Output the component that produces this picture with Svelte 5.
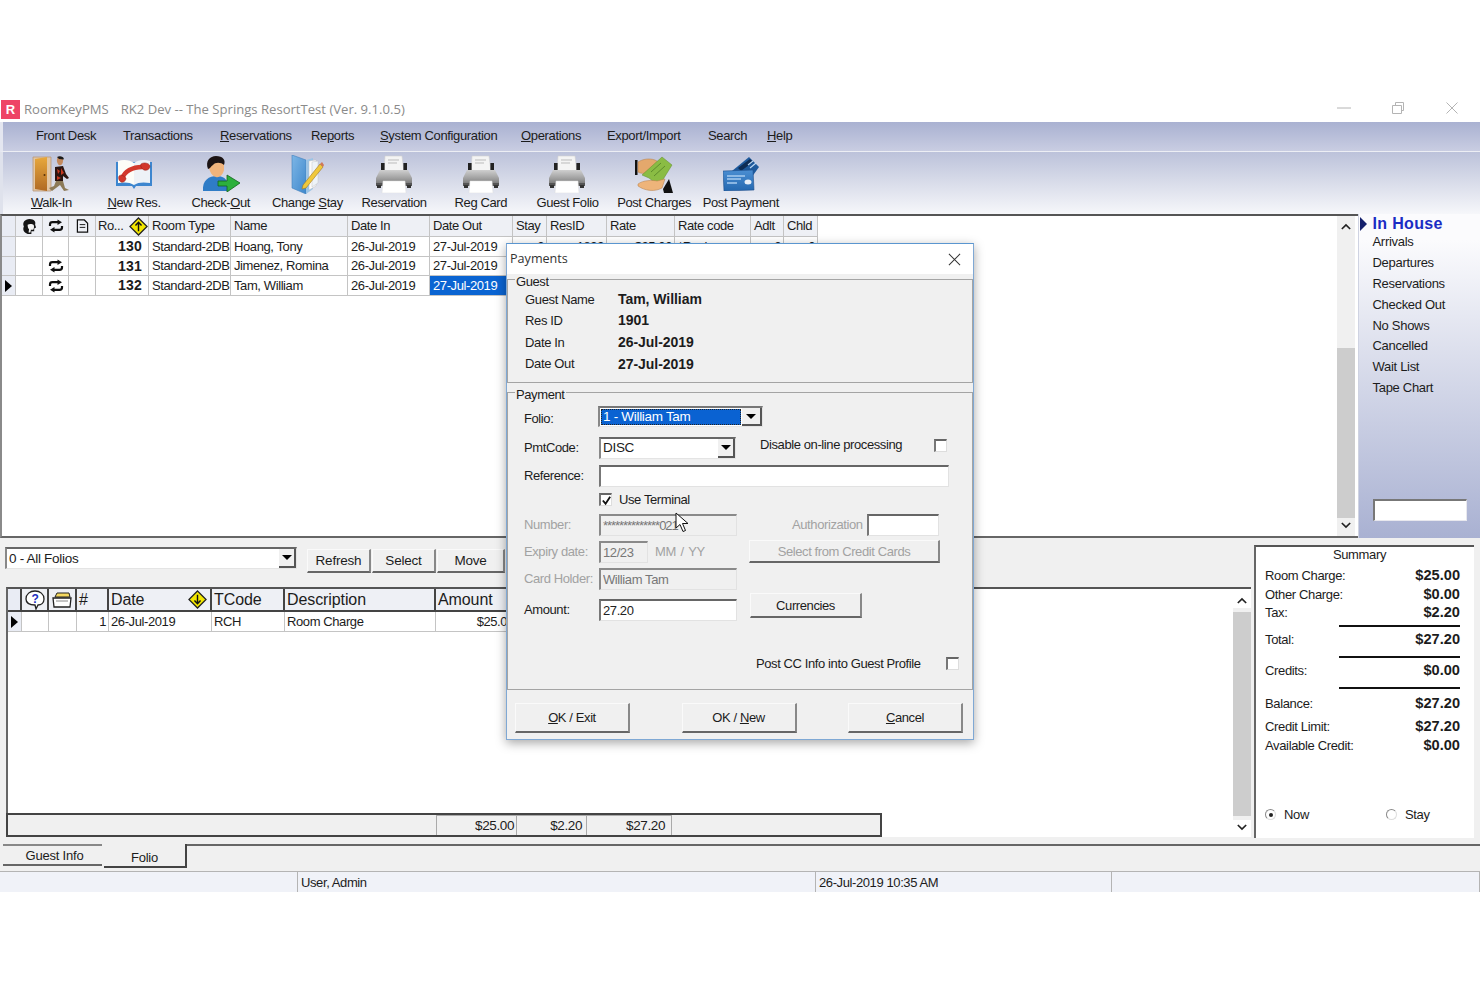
<script>
	const menu = [
		['', 'Front Desk', ''],
		['', 'Transactions', ''],
		['', 'R', 'eservations'],
		['Re', 'p', 'orts'],
		['', 'S', 'ystem Configuration'],
		['', 'O', 'perations'],
		['', 'Export/Import', ''],
		['', 'Search', ''],
		['', 'H', 'elp']
	];
	const sideLinks = ['Arrivals', 'Departures', 'Reservations', 'Checked Out', 'No Shows', 'Cancelled', 'Wait List', 'Tape Chart'];
	const headers = ['Room Type', 'Name', 'Date In', 'Date Out', 'Stay', 'ResID', 'Rate', 'Rate code', 'Adlt', 'Chld'];
	const rooms = [
		{ room: 130, type: 'Standard-2DB', name: 'Hoang, Tony', repeat: false, current: false },
		{ room: 131, type: 'Standard-2DB', name: 'Jimenez, Romina', repeat: true, current: false },
		{ room: 132, type: 'Standard-2DB', name: 'Tam, William', repeat: true, current: true }
	];
	const guest = [
		['Guest Name', 'Tam, William'],
		['Res ID', '1901'],
		['Date In', '26-Jul-2019'],
		['Date Out', '27-Jul-2019']
	];
</script>

{#snippet repeatIcon()}
	<svg class="repeat" viewBox="0 0 16 14" width="16" height="14">
		<path d="M2 7V5.5C2 4 3 3.2 4.5 3.2H10" fill="none" stroke="#111" stroke-width="2.2" />
		<path d="M9.5 0.4L14 3.2L9.5 6Z" fill="#111" />
		<path d="M14 7V8.5C14 10 13 10.8 11.5 10.8H6" fill="none" stroke="#111" stroke-width="2.2" />
		<path d="M6.5 8L2 10.8L6.5 13.6Z" fill="#111" />
	</svg>
{/snippet}

{#snippet sortIcon(path)}
	<svg viewBox="0 0 20 20" width="19" height="19">
		<path d="M10 1L19 10L10 19L1 10Z" fill="#f2e600" stroke="#222" stroke-width="1.3" />
		<path d={path} fill="none" stroke="#111" stroke-width="1.5" />
	</svg>
{/snippet}

{#snippet printer()}
	<svg viewBox="0 0 38 38" width="38" height="38">
		<path d="M10 1H27L29 17H9Z" fill="#f4f4f4" stroke="#d0d0d0" stroke-width="0.6" />
		<path d="M13 5H24M13 8H22" stroke="#bbb" stroke-width="1" />
		<rect x="6" y="8" width="3.6" height="9" fill="#222" />
		<rect x="28.4" y="8" width="3.6" height="9" fill="#222" />
		<path d="M5 15H33L37 23V30H1V23Z" fill="url(#printerBody)" />
		<rect x="1" y="28" width="36" height="3" fill="#555" />
		<path d="M8 26H30L31 38H7Z" fill="#fff" stroke="#ddd" stroke-width="0.5" />
		<rect x="2" y="30" width="4" height="3" fill="#333" />
		<rect x="32" y="30" width="4" height="3" fill="#333" />
	</svg>
{/snippet}

{#snippet toolIcon(kind)}
	{#if kind === 'walk'}
		<svg viewBox="0 0 38 36" width="38" height="36">
			<path d="M1 1H19V35H1Z" fill="#e2c6a4" stroke="#b89878" stroke-width="0.8" />
			<path d="M3 3L15 1V35L3 33Z" fill="url(#doorFill)" />
			<circle cx="12.5" cy="19" r="1" fill="#5a3208" />
			<path d="M26 1C29 0 32 2 31 5C31 8 29 10 27 9C25 8 24 3 26 1Z" fill="#c48a5e" />
			<path d="M25 1C28-1 33 1 31.5 3.5L27 3Z" fill="#1a1a1a" />
			<path d="M23 11L31 10L34 18L37 22L35 23L31 20L31 25L23 25Z" fill="#2a1410" />
			<path d="M25 13L28 15L26 18ZM29 12L32 17L29 19ZM25 20L29 22L25 24Z" fill="#c43820" />
			<path d="M24 25L31 25L33 32L37 34L32 35L28 29L24 32L20 35L17 32L22 30Z" fill="#8c7a58" />
		</svg>
	{:else if kind === 'book'}
		<svg viewBox="0 0 38 31" width="38" height="31">
			<path d="M1 3H19L37 3V27H21L19 30L17 27H1Z" fill="#3d86cf" />
			<path d="M3 2C9 0 15 1 19 4V26C15 23 9 23 3 24Z" fill="#fdfdf8" />
			<path d="M35 2C29 0 23 1 19 4V26C23 23 29 23 35 24Z" fill="#eef2f7" />
			<path d="M7 20C9 13 17 7 30 8" fill="none" stroke="#d2382c" stroke-width="4.5" />
			<path d="M4 17C6 15 9 17 11 19C11 22 8 24 6 23C4 22 3 19 4 17Z" fill="#d2382c" stroke="#8e2018" stroke-width="0.5" />
			<path d="M26 5C29 3 34 4 35 7C35 10 32 12 29 11C27 10 25 7 26 5Z" fill="#d2382c" stroke="#8e2018" stroke-width="0.5" />
		</svg>
	{:else if kind === 'check'}
		<svg viewBox="0 0 38 36" width="38" height="36">
			<path d="M1 35C0 24 7 20 15 20C23 20 27 25 27 35Z" fill="#2f7cc6" />
			<path d="M7 6H22V14C21 19 17 22 14 21C10 20 8 16 7 12Z" fill="#f0b47c" />
			<path d="M6 13C3 5 8 0 14 0C21 0 24 4 22 9C19 6 13 6 11 9C9 10 8 13 6 13Z" fill="#1c1414" />
			<path d="M16 25H25V19L38 27L25 36V30H16Z" fill="#2cb03c" stroke="#14621e" stroke-width="0.8" />
		</svg>
	{:else if kind === 'folder'}
		<svg viewBox="0 0 33 39" width="33" height="39">
			<path d="M1 0L15 5V39L1 33Z" fill="url(#folderFill)" stroke="#3f80bc" stroke-width="0.6" />
			<path d="M15 5L22 3V34L15 39Z" fill="#9cc4e6" />
			<path d="M18 6L25 5V31L18 35Z" fill="#fbfbfb" stroke="#bbb" stroke-width="0.4" />
			<path d="M21 7L27 6V28L21 32Z" fill="#eef3f8" stroke="#bbb" stroke-width="0.4" />
			<path d="M12 30L29 9L32 12L15 33L11 34Z" fill="#f0c83c" stroke="#a07820" stroke-width="0.6" />
			<path d="M29 9L31 7L33 10L32 12Z" fill="#d07858" />
		</svg>
	{:else if kind === 'money'}
		<svg viewBox="0 0 38 37" width="38" height="37">
			<rect x="0" y="4" width="2.5" height="15" fill="#111" />
			<path d="M3 6C8 3 14 2 20 4L27 8L18 15C12 18 6 18 3 16Z" fill="#e4a86c" stroke="#b47c44" stroke-width="0.5" />
			<path d="M7 19L27 1L37 9L24 30L14 22Z" fill="#8abc44" stroke="#5e8c2c" stroke-width="0.5" />
			<path d="M16 16L26 7M19 20L30 10" stroke="#5e8c2c" stroke-width="1" />
			<path d="M3 28C8 24 18 24 22 25L30 23L27 32C20 36 10 35 3 30Z" fill="#eeb47a" stroke="#b47c44" stroke-width="0.5" />
			<path d="M28 33L34 23L38 37H29Z" fill="#111" />
		</svg>
	{:else if kind === 'card'}
		<svg viewBox="0 0 36 34" width="36" height="34">
			<path d="M9 14L26 0L36 10L26 24H12Z" fill="#1f5a9c" />
			<path d="M15 11L27 2L30 5L18 14Z" fill="#0e2c54" />
			<path d="M25 8L30 4M27 11L33 6" stroke="#bcd8f4" stroke-width="1.2" />
			<path d="M0 14L30 13L31 33L1 34Z" fill="url(#cardFill)" stroke="#1c4e8c" stroke-width="0.6" />
			<path d="M4 19H22M4 22H18M4 26H14" stroke="#a8ccf0" stroke-width="1.4" />
			<ellipse cx="25" cy="25" rx="3.5" ry="2.5" fill="#e6eef8" />
		</svg>
	{/if}
{/snippet}

<svg class="defs" width="0" height="0" aria-hidden="true">
	<defs>
		<linearGradient id="printerBody" x1="0" y1="0" x2="0" y2="1">
			<stop offset="0" stop-color="#cfcfcf" />
			<stop offset="0.6" stop-color="#9c9c9c" />
			<stop offset="1" stop-color="#6e6e6e" />
		</linearGradient>
		<linearGradient id="doorFill" x1="0" y1="0" x2="0" y2="1">
			<stop offset="0" stop-color="#e8a83c" />
			<stop offset="1" stop-color="#b06a24" />
		</linearGradient>
		<linearGradient id="folderFill" x1="0" y1="0" x2="1" y2="1">
			<stop offset="0" stop-color="#7db6e6" />
			<stop offset="1" stop-color="#3f88cc" />
		</linearGradient>
		<linearGradient id="cardFill" x1="0" y1="0" x2="0" y2="1">
			<stop offset="0" stop-color="#4b8ed2" />
			<stop offset="1" stop-color="#2468b0" />
		</linearGradient>
	</defs>
</svg>

<div class="app">
	<header class="titlebar">
		<span class="app-logo">R</span>
		<span class="app-title">RoomKeyPMS<span class="title-gap"></span>RK2 Dev -- The Springs ResortTest (Ver. 9.1.0.5)</span>
		<div class="win-btns">
			<svg viewBox="0 0 14 14" width="14" height="14"><path d="M0 7H14" stroke="#b4b4b4" /></svg>
			<svg viewBox="0 0 14 14" width="14" height="14"><path d="M1.5 4.5H10.5V12.5H1.5ZM4.5 4.5V1.5H12.5V9.5H10.5" fill="none" stroke="#b4b4b4" /></svg>
			<svg viewBox="0 0 14 14" width="14" height="14"><path d="M1.5 1.5L12.5 12.5M12.5 1.5L1.5 12.5" stroke="#b4b4b4" /></svg>
		</div>
	</header>

	<nav class="menubar">
		{#each menu as [before, key, after]}
			<span>
				{before}{#if key.length === 1}<u>{key}</u>{:else}{key}{/if}{after}
			</span>
		{/each}
	</nav>

	<div class="toolbar">
		<div class="tool first"><span class="tool-icon">{@render toolIcon('walk')}</span><span><u>W</u>alk-In</span></div>
		<div class="tool"><span class="tool-icon">{@render toolIcon('book')}</span><span><u>N</u>ew Res.</span></div>
		<div class="tool"><span class="tool-icon">{@render toolIcon('check')}</span><span>Check-<u>O</u>ut</span></div>
		<div class="tool"><span class="tool-icon">{@render toolIcon('folder')}</span><span>Change <u>S</u>tay</span></div>
		<div class="tool"><span class="tool-icon">{@render printer()}</span><span>Reservation</span></div>
		<div class="tool"><span class="tool-icon">{@render printer()}</span><span>Reg Card</span></div>
		<div class="tool"><span class="tool-icon">{@render printer()}</span><span>Guest Folio</span></div>
		<div class="tool"><span class="tool-icon">{@render toolIcon('money')}</span><span>Post Charges</span></div>
		<div class="tool"><span class="tool-icon">{@render toolIcon('card')}</span><span>Post Payment</span></div>
	</div>

	<section class="upper">
		<div class="room-pane">
			<div class="room-grid">
				<div class="room-row head">
					<div class="cell ind"></div>
					<div class="cell mid">
						<svg viewBox="0 0 16 18" width="15" height="17">
							<path d="M4 16C1 14 1 11 2 9C0 5 3 1 8 1C13 1 15 4 14 7L15 10L13 11V14L10 14V17H6Z" fill="#151515" />
							<path d="M6 7C8 6 11 6 12.5 7.5C13 9 13 11 12 12.5L9.5 12.5L9 15.5H7L7.5 12C6.5 11 6 9 6 7Z" fill="#f4f4f4" />
						</svg>
					</div>
					<div class="cell mid">{@render repeatIcon()}</div>
					<div class="cell mid">
						<svg viewBox="0 0 14 15" width="13" height="14">
							<path d="M1.5 1H9L12.5 4.5V14H1.5Z" fill="none" stroke="#111" stroke-width="1.3" />
							<path d="M4 6H10M4 9H10" stroke="#111" />
						</svg>
					</div>
					<div class="cell room-head"><span>Ro...</span>{@render sortIcon('M10 15V6M6.8 9L10 5.5L13.2 9')}</div>
					{#each headers as h}
						<div class="cell">{h}</div>
					{/each}
				</div>
				{#each rooms as r, i}
					<div class="room-row">
						<div class="cell ind mid">
							{#if r.current}<span class="pointer"></span>{/if}
						</div>
						<div class="cell"></div>
						<div class="cell mid">
							{#if r.repeat}{@render repeatIcon()}{/if}
						</div>
						<div class="cell"></div>
						<div class="cell room-no">{r.room}</div>
						<div class="cell">{r.type}</div>
						<div class="cell">{r.name}</div>
						<div class="cell">26-Jul-2019</div>
						<div class="cell" class:picked={r.current}>27-Jul-2019</div>
						{#if i === 0}
							<div class="cell right">2</div>
							<div class="cell right">1899</div>
							<div class="cell right">$25.00</div>
							<div class="cell">*Rack</div>
							<div class="cell right">2</div>
							<div class="cell right">0</div>
						{:else}
							<div class="cell"></div>
							<div class="cell"></div>
							<div class="cell"></div>
							<div class="cell"></div>
							<div class="cell"></div>
							<div class="cell"></div>
						{/if}
					</div>
				{/each}
			</div>
			<div class="scrollbar upper-scroll">
				<svg viewBox="0 0 12 8" width="10" height="7"><path d="M1 7L6 2L11 7" fill="none" stroke="#222" stroke-width="2" /></svg>
				<div class="track"><div class="thumb"></div></div>
				<svg viewBox="0 0 12 8" width="10" height="7"><path d="M1 1L6 6L11 1" fill="none" stroke="#222" stroke-width="2" /></svg>
			</div>
		</div>

		<aside class="side">
			<div class="side-head"><span class="side-arrow"></span>In House</div>
			{#each sideLinks as link}
				<div class="side-link">{link}</div>
			{/each}
			<input class="side-input" aria-label="Search" />
		</aside>
	</section>

	<section class="lower">
		<div class="folio">
			<div class="folio-tools">
				<div class="combo all-folios">
					<span class="combo-text">0 - All Folios</span>
					<span class="combo-btn"><i></i></span>
				</div>
				<div class="folio-btns">
					<button class="btn">Refresh</button>
					<button class="btn">Select</button>
					<button class="btn">Move</button>
				</div>
			</div>

			<div class="folio-grid">
				<div class="folio-main">
					<div class="folio-table">
						<div class="folio-row head">
							<div class="cell ind"></div>
							<div class="cell mid">
								<svg viewBox="0 0 20 20" width="20" height="20">
									<path d="M10 1C15 1 19 4 19 9C19 13 16 15 13 15L11 19L10 15C5 15 1 13 1 9C1 4 5 1 10 1Z" fill="#fff" stroke="#222" stroke-width="1.3" />
									<text x="10" y="13" font-size="12" font-weight="700" text-anchor="middle" fill="#2030c0" font-family="Liberation Sans, sans-serif">?</text>
								</svg>
							</div>
							<div class="cell mid">
								<svg viewBox="0 0 20 16" width="20" height="16">
									<path d="M3 5L5 1H17L18 5Z" fill="#f4d860" stroke="#222" />
									<path d="M1 6H19L18 15H2Z" fill="#fff" stroke="#222" stroke-width="1.3" />
									<path d="M4 9H16" stroke="#888" />
								</svg>
							</div>
							<div class="cell">#</div>
							<div class="cell date-head"><span>Date</span>{@render sortIcon('M10 5V14M6.8 11L10 14.5L13.2 11')}</div>
							<div class="cell">TCode</div>
							<div class="cell">Description</div>
							<div class="cell">Amount</div>
						</div>
						<div class="folio-row">
							<div class="cell ind mid"><span class="pointer"></span></div>
							<div class="cell"></div>
							<div class="cell"></div>
							<div class="cell right">1</div>
							<div class="cell">26-Jul-2019</div>
							<div class="cell">RCH</div>
							<div class="cell">Room Charge</div>
							<div class="cell right">$25.00</div>
						</div>
					</div>
					<div class="totals">
						<span>$25.00</span>
						<span>$2.20</span>
						<span>$27.20</span>
					</div>
				</div>
				<div class="scrollbar lower-scroll">
					<svg viewBox="0 0 12 8" width="10" height="7"><path d="M1 7L6 2L11 7" fill="none" stroke="#222" stroke-width="2" /></svg>
					<div class="track"><div class="thumb"></div></div>
					<svg viewBox="0 0 12 8" width="10" height="7"><path d="M1 1L6 6L11 1" fill="none" stroke="#222" stroke-width="2" /></svg>
				</div>
			</div>
		</div>

		<aside class="summary">
			<div class="sum-title">Summary</div>
			<div class="sum-row s-room"><span>Room Charge:</span><b>$25.00</b></div>
			<div class="sum-row s-other"><span>Other Charge:</span><b>$0.00</b></div>
			<div class="sum-row s-tax"><span>Tax:</span><b>$2.20</b></div>
			<div class="sum-rule r-1"></div>
			<div class="sum-row s-total"><span>Total:</span><b>$27.20</b></div>
			<div class="sum-rule r-2"></div>
			<div class="sum-row s-credits"><span>Credits:</span><b>$0.00</b></div>
			<div class="sum-rule r-3"></div>
			<div class="sum-row s-balance"><span>Balance:</span><b>$27.20</b></div>
			<div class="sum-row s-limit"><span>Credit Limit:</span><b>$27.20</b></div>
			<div class="sum-row s-avail"><span>Available Credit:</span><b>$0.00</b></div>
			<div class="sum-radios">
				<label><span class="radio on"></span>Now</label>
				<label><span class="radio"></span>Stay</label>
			</div>
		</aside>
	</section>

	<div class="tabs">
		<div class="tab">Guest Info</div>
		<div class="tab active">Folio</div>
		<div class="tab-rest"></div>
	</div>

	<footer class="status">
		<div></div>
		<div>User, Admin</div>
		<div>26-Jul-2019 10:35 AM</div>
		<div></div>
	</footer>

	<div class="dialog">
		<div class="dlg-title">
			<span>Payments</span>
			<svg viewBox="0 0 14 14" width="13" height="13"><path d="M1 1L13 13M13 1L1 13" stroke="#333" stroke-width="1.1" /></svg>
		</div>

		<fieldset class="group guest">
			<legend>Guest</legend>
			{#each guest as [label, value]}
				<div class="guest-row"><span>{label}</span><b>{value}</b></div>
			{/each}
		</fieldset>

		<fieldset class="group payment">
			<legend>Payment</legend>

			<div class="row r-folio">
				<span class="lab">Folio:</span>
				<div class="combo folio-combo">
					<span class="combo-text sel">1 - William Tam</span>
					<span class="combo-btn"><i></i></span>
				</div>
			</div>

			<div class="row r-code">
				<span class="lab">PmtCode:</span>
				<div class="combo code-combo">
					<span class="combo-text">DISC</span>
					<span class="combo-btn"><i></i></span>
				</div>
				<span class="disable-lab">Disable on-line processing</span>
				<span class="check"></span>
			</div>

			<div class="row r-ref">
				<span class="lab">Reference:</span>
				<input class="field ref" aria-label="Reference" />
			</div>

			<div class="row r-term">
				<span class="check on">
					<svg viewBox="0 0 12 12" width="11" height="11"><path d="M2 6L5 9.5L10 2" fill="none" stroke="#111" stroke-width="2" /></svg>
				</span>
				<span class="term-lab">Use Terminal</span>
			</div>

			<div class="row r-num">
				<span class="lab off">Number:</span>
				<input class="field wide off stars" value="**************021" disabled />
				<span class="auth-lab off">Authorization</span>
				<input class="field auth" aria-label="Authorization" />
			</div>

			<div class="row r-exp">
				<span class="lab off">Expiry date:</span>
				<input class="field exp off" value="12/23" disabled />
				<span class="fmt off">MM / YY</span>
				<button class="btn pick off">Select from Credit Cards</button>
			</div>

			<div class="row r-holder">
				<span class="lab off">Card Holder:</span>
				<input class="field wide off" value="William Tam" disabled />
			</div>

			<div class="row r-amount">
				<span class="lab">Amount:</span>
				<input class="field wide" value="27.20" />
				<button class="btn curr">Currencies</button>
			</div>

			<div class="row r-post">
				<span class="post-lab">Post CC Info into Guest Profile</span>
				<span class="check"></span>
			</div>
		</fieldset>

		<div class="dlg-actions">
			<button class="btn act"><u>O</u>K / Exit</button>
			<button class="btn act">OK / <u>N</u>ew</button>
			<button class="btn act"><u>C</u>ancel</button>
		</div>

		<svg class="mouse" viewBox="0 0 15 21" width="15" height="21">
			<path d="M1 1V16L5 12.5L8 19.5L10.5 18.5L7.5 11.5L13 11.5Z" fill="#fff" stroke="#111" stroke-width="1" />
		</svg>
	</div>
</div>

<style>
	:global(body) {
		background: #fff;
	}

	.defs {
		position: absolute;
	}

	.app {
		position: relative;
		margin-top: 97px;
		width: 1480px;
		height: 795px;
		overflow: hidden;
		background: #f0f0f0;
		color: #1c1c1c;
		font: 13px/1.2 'Liberation Sans', Arial, sans-serif;
		letter-spacing: -0.4px;
	}

	.titlebar {
		height: 25px;
		background: #fff;
		display: flex;
		align-items: center;
		padding-left: 1px;
		color: #8a8a8a;
		font-family: 'Open Sans', sans-serif;
		font-size: 13.1px;
		letter-spacing: 0;
	}

	.title-gap {
		display: inline-block;
		width: 12px;
	}

	.app-logo {
		width: 19px;
		height: 19px;
		background: #ee4466;
		color: #fff;
		font: bold 13px/19px 'Liberation Sans', sans-serif;
		text-align: center;
		margin-right: 4px;
	}

	.win-btns {
		margin-left: auto;
		margin-right: 1px;
		display: grid;
		grid-template-columns: repeat(3, 54px);
		justify-items: center;
		padding-bottom: 4px;
	}

	.menubar {
		height: 30px;
		box-sizing: border-box;
		border-left: 3px solid #e4e6f0;
		background: linear-gradient(#a9b1d1, #c9cde2);
		border-bottom: 1px solid #eceef4;
		display: grid;
		grid-template-columns: 87px 97px 91px 69px 141px 86px 101px 59px auto;
		align-items: center;
		justify-content: start;
		padding: 0 0 2px 33px;
		letter-spacing: -0.35px;
		font-size: 13px;
	}

	.toolbar {
		height: 62px;
		box-sizing: border-box;
		border-left: 3px solid #dfe2ec;
		padding: 3px 0 0 5px;
		background: linear-gradient(#bcc2da, #f6f7fa);
		display: flex;
		letter-spacing: -0.4px;
	}

	.tool {
		width: 86.7px;
		flex: none;
		box-sizing: border-box;
		display: flex;
		flex-direction: column;
		align-items: center;
		white-space: nowrap;
	}

	.tool.first {
		width: 82.7px;
		padding-left: 4px;
	}

	.tool-icon {
		height: 38px;
		display: flex;
		align-items: center;
		margin-bottom: 2px;
	}

	.upper {
		height: 324px;
		display: flex;
	}

	.room-pane {
		width: 1358px;
		box-sizing: border-box;
		display: flex;
		background: #fff;
		border-top: 2px solid #555;
		border-left: 2px solid #8a8a8a;
		border-bottom: 2px solid #666;
	}

	.room-grid {
		width: 1335px;
	}

	.room-row {
		display: grid;
		grid-template-columns: 14px 27px 26px 27px 53px 82px 117px 82px 83px 34px 60px 68px 76px 33px 34px;
		height: 19.7px;
		width: 816px;
	}

	.room-row.head {
		height: 21px;
	}

	.cell {
		box-sizing: border-box;
		border-right: 1px solid #c4c4c4;
		border-bottom: 1px solid #c4c4c4;
		padding: 0 2px 0 3px;
		display: flex;
		align-items: center;
		white-space: nowrap;
		overflow: hidden;
	}

	.head .cell {
		background: #eef0f5;
	}

	.cell.ind {
		background: #e9ecf4;
	}

	.cell.mid {
		justify-content: center;
		padding: 0;
	}

	.cell.right {
		justify-content: flex-end;
	}

	.room-head {
		justify-content: space-between;
		padding-left: 2px;
		padding-right: 0;
	}

	.room-no {
		justify-content: flex-end;
		font-weight: bold;
		font-size: 14px;
		letter-spacing: 0.2px;
		padding-right: 6px;
	}

	.cell.picked {
		background: #0a64d2;
		color: #fff;
	}

	.pointer {
		width: 0;
		height: 0;
		border-left: 7px solid #000;
		border-top: 6.5px solid transparent;
		border-bottom: 6.5px solid transparent;
	}

	.repeat {
		display: block;
	}

	.scrollbar {
		width: 18px;
		background: #f0f0f0;
		display: flex;
		flex-direction: column;
		align-items: center;
		justify-content: space-between;
		padding: 7px 0;
		box-sizing: border-box;
	}

	.track {
		flex: 1;
		align-self: stretch;
		display: flex;
		flex-direction: column;
		justify-content: flex-end;
	}

	.thumb {
		background: #cdcdcd;
	}

	.upper-scroll .track {
		padding-bottom: 4px;
	}

	.upper-scroll .thumb {
		height: 170px;
	}

	.lower-scroll {
		background: #fff;
		padding: 8px 0 6px;
	}

	.lower-scroll .track {
		padding: 4px 0;
		background: #f0f0f0;
		margin: 4px 0;
	}

	.lower-scroll .thumb {
		flex: 1;
	}

	.side {
		flex: 1;
		box-sizing: border-box;
		background: linear-gradient(#fbfbfd 8%, #a9b1d2);
		display: flex;
		flex-direction: column;
		padding-left: 13.5px;
		letter-spacing: -0.3px;
		border-left: 1px solid #cfd3e2;
	}

	.side-head {
		position: relative;
		height: 18px;
		line-height: 19px;
		color: #1a2cc4;
		font-size: 16px;
		font-weight: bold;
		letter-spacing: 0.35px;
	}

	.side-arrow {
		position: absolute;
		left: -12.5px;
		top: 3px;
		border-left: 7px solid #14206c;
		border-top: 7px solid transparent;
		border-bottom: 7px solid transparent;
	}

	.side-link {
		height: 20.9px;
		line-height: 20px;
	}

	.side-input {
		margin-top: 100px;
		width: 94px;
		height: 22px;
		box-sizing: border-box;
		border: 0;
		border-top: 2px solid #777;
		border-left: 2px solid #777;
		border-right: 1px solid #e8e8ee;
		border-bottom: 1px solid #e8e8ee;
		background: #fff;
	}

	.lower {
		height: 306px;
		display: flex;
	}

	.folio {
		width: 1254px;
		padding-left: 6px;
		box-sizing: border-box;
	}

	.folio-tools {
		display: flex;
		height: 49px;
		padding-top: 9px;
		box-sizing: border-box;
	}

	.combo {
		display: flex;
		box-sizing: border-box;
		background: #fff;
		border-top: 2px solid #666;
		border-left: 2px solid #888;
		border-right: 1px solid #e4e4e4;
		border-bottom: 1px solid #e4e4e4;
		align-items: stretch;
	}

	.combo-text {
		flex: 1;
		display: flex;
		align-items: center;
		padding-left: 2px;
		font-size: 13.5px;
		letter-spacing: -0.3px;
	}

	.combo-btn {
		width: 17px;
		box-sizing: border-box;
		background: #f0f0f0;
		border-right: 2px solid #555;
		border-bottom: 2px solid #555;
		display: flex;
		align-items: center;
		justify-content: center;
	}

	.combo-btn i {
		border-top: 5px solid #000;
		border-left: 5px solid transparent;
		border-right: 5px solid transparent;
	}

	.all-folios {
		width: 292px;
		height: 22px;
		margin-left: -1px;
	}

	.all-folios .combo-text {
		padding-left: 2px;
		padding-top: 2px;
	}

	.folio-btns {
		display: flex;
		margin-left: 10px;
		margin-top: 2px;
		gap: 1px;
	}

	.btn {
		box-sizing: border-box;
		background: #f0f0f0;
		border: 0;
		border-top: 1px solid #fafafa;
		border-left: 1px solid #fafafa;
		border-right: 2px solid #888;
		border-bottom: 2px solid #666;
		color: inherit;
		font: inherit;
		letter-spacing: inherit;
		padding: 0;
		white-space: nowrap;
	}

	.folio-btns .btn {
		width: 64px;
		height: 24px;
		padding-top: 2px;
		font-size: 13.5px;
		letter-spacing: -0.2px;
	}

	.folio-btns .btn:last-child {
		width: 68px;
	}

	.folio-grid {
		display: flex;
		height: 250px;
		width: 1245px;
		background: #fff;
		border-top: 2px solid #555;
		border-left: 2px solid #666;
		box-sizing: border-box;
	}

	.folio-main {
		width: 1225px;
		display: flex;
		flex-direction: column;
		justify-content: space-between;
	}

	.folio-row {
		display: grid;
		grid-template-columns: 14px 27px 28px 32px 103px 73px 151px 81px;
		height: 20px;
		width: 509px;
	}

	.folio-row .cell {
		padding-left: 2px;
	}

	.folio-row .cell.mid {
		padding: 0;
	}

	.folio-row.head {
		height: 23px;
	}

	.folio-row.head .cell {
		border-right: 2px solid #444;
		border-bottom: 2px solid #444;
		font-size: 16px;
		letter-spacing: -0.1px;
	}

	.folio-row .date-head {
		justify-content: space-between;
		padding-right: 3px;
	}

	.totals {
		box-sizing: border-box;
		width: 876px;
		height: 24px;
		background: #f0f0f0;
		border: 2px solid #444;
		margin-left: -2px;
		padding-left: 428px;
		display: grid;
		grid-template-columns: 80px 70px 86px;
	}

	.totals span {
		border-left: 1px solid #aaa;
		border-top: 1px solid #aaa;
		text-align: right;
		padding-right: 2px;
		line-height: 19px;
		font-size: 13.5px;
	}

	.totals span:nth-child(2) {
		padding-right: 4px;
	}

	.totals span:last-child {
		padding-right: 6px;
		border-right: 1px solid #aaa;
	}

	.summary {
		width: 220px;
		height: 293px;
		margin-top: 7px;
		box-sizing: border-box;
		background: #fff;
		border-top: 2px solid #555;
		border-left: 2px solid #666;
		padding: 0 14px 0 9px;
		display: flex;
		flex-direction: column;
		letter-spacing: -0.35px;
	}

	.sum-title {
		text-align: center;
		line-height: 15px;
		padding-right: 6px;
	}

	.sum-row {
		display: flex;
		justify-content: space-between;
		align-items: center;
		height: 18px;
	}

	.sum-row b {
		font-size: 14.6px;
		letter-spacing: 0;
	}

	.s-room { margin-top: 5px; }
	.s-other { margin-top: 1px; }
	.s-total { margin-top: 4px; }
	.s-credits { margin-top: 4px; }
	.s-balance { margin-top: 6px; }
	.s-limit { margin-top: 5px; }
	.s-avail { margin-top: 1px; }

	.sum-rule {
		align-self: flex-end;
		width: 121px;
		height: 2px;
		background: #111;
	}

	.r-1 { margin-top: 3px; }
	.r-2 { margin-top: 7px; }
	.r-3 { margin-top: 7px; }

	.sum-radios {
		margin-top: 52px;
		display: grid;
		grid-template-columns: 121px auto;
	}

	.sum-radios label {
		display: flex;
		align-items: center;
		gap: 8px;
	}

	.radio {
		width: 11px;
		height: 11px;
		box-sizing: border-box;
		border-radius: 50%;
		border: 1px solid #8a8a8a;
		border-right-color: #ddd;
		border-bottom-color: #ddd;
		background: #fff;
		position: relative;
	}

	.radio.on::after {
		content: '';
		position: absolute;
		inset: 2.5px;
		border-radius: 50%;
		background: #222;
	}

	.tabs {
		height: 27px;
		display: flex;
		align-items: flex-start;
		padding-left: 3px;
	}

	.tab {
		height: 22px;
		line-height: 20px;
		width: 99px;
		box-sizing: border-box;
		text-align: center;
		letter-spacing: -0.2px;
		padding-left: 4px;
		border-top: 2px solid #888;
		border-bottom: 2px solid #666;
	}

	.tab.active {
		width: 83px;
		height: 24px;
		margin-left: 2px;
		padding-left: 0;
		line-height: 28px;
		border-top: 0;
		border-right: 2px solid #444;
		border-bottom: 2px solid #444;
	}

	.tab-rest {
		flex: 1;
		border-top: 2px solid #666;
	}

	.status {
		height: 21px;
		box-sizing: border-box;
		display: grid;
		grid-template-columns: 298px 518px 296px 1fr;
		background: #f0f2f8;
		border-top: 1px solid #b4b4b4;
	}

	.status div {
		border-right: 1px solid #b4b4b4;
		padding-left: 3px;
		line-height: 22px;
	}

	.dialog {
		position: absolute;
		left: 506px;
		top: 146px;
		width: 468px;
		height: 497px;
		box-sizing: border-box;
		background: #f0f0f0;
		border: 1px solid #7fa8d4;
		border-top-color: #5a96d0;
		box-shadow: 0 3px 10px rgba(0, 0, 0, 0.35);
		display: flex;
		flex-direction: column;
	}

	.dlg-title {
		height: 30px;
		flex: none;
		background: #fff;
		display: flex;
		align-items: center;
		justify-content: space-between;
		padding: 0 12px 0 3px;
		font-family: 'Open Sans', sans-serif;
		font-size: 12.6px;
		letter-spacing: 0;
		color: #333;
	}

	.group {
		margin: 0;
		padding: 0;
		border: 1px solid #a4a4a4;
		box-sizing: border-box;
		min-width: 0;
	}

	.group legend {
		margin-left: 7px;
		padding: 0 1px;
		line-height: 15px;
		height: 11px;
		font-size: 13px;
		letter-spacing: -0.4px;
	}

	.guest {
		height: 109px;
	}

	.guest-row {
		display: flex;
		height: 21.6px;
		align-items: center;
		padding-left: 17px;
		letter-spacing: -0.35px;
	}

	.guest-row:first-of-type {
		margin-top: 3.5px;
	}

	.guest-row span {
		width: 93px;
	}

	.guest-row b {
		font-size: 14px;
		letter-spacing: -0.05px;
	}

	.payment {
		margin-top: 4px;
		height: 303px;
		padding-left: 16px;
	}

	.payment legend {
		margin-left: -9px;
	}

	.row {
		display: flex;
		align-items: center;
	}

	.lab {
		width: 75px;
		flex: none;
		white-space: nowrap;
	}

	.r-folio .lab {
		padding-top: 4px;
	}

	.off {
		color: #a2a2a2;
	}

	.field {
		box-sizing: border-box;
		height: 22px;
		border: 0;
		border-top: 2px solid #666;
		border-left: 2px solid #777;
		border-right: 1px solid #e2e2e2;
		border-bottom: 1px solid #e2e2e2;
		background: #fff;
		font: inherit;
		letter-spacing: inherit;
		color: #222;
		padding: 0 0 0 2px;
		outline: none;
		flex: none;
	}

	.field.off {
		background: #f0f0f0;
		color: #777;
		border-top-color: #8a8a8a;
		border-left-color: #8a8a8a;
	}

	.r-folio { margin-top: 8px; height: 21px; }
	.r-code { margin-top: 10px; height: 22px; }
	.r-ref { margin-top: 6px; height: 22px; }
	.r-term { margin-top: 6px; height: 13px; padding-left: 75px; }
	.r-num { margin-top: 8px; height: 22px; }
	.r-exp { margin-top: 4px; height: 23px; }
	.r-holder { margin-top: 4px; height: 23px; }
	.r-amount { margin-top: 3px; height: 28px; align-items: flex-end; }
	.r-post { margin-top: 36px; height: 13px; padding-left: 232px; }

	.r-amount .lab {
		padding-bottom: 3px;
	}

	.folio-combo {
		width: 165px;
		height: 21px;
		margin-left: -1px;
		border-top-color: #777;
	}

	.combo-text.sel {
		background: #0a62d2;
		color: #fff;
		margin: 1px;
		outline: 1px dotted #222;
		outline-offset: -1px;
	}

	.folio-combo .combo-btn {
		width: 20px;
	}

	.code-combo {
		width: 137px;
		height: 22px;
	}

	.disable-lab {
		margin-left: 24px;
		width: 174px;
		flex: none;
		padding-bottom: 6px;
	}

	.check {
		width: 13px;
		height: 13px;
		box-sizing: border-box;
		flex: none;
		background: #fff;
		border-top: 2px solid #666;
		border-left: 2px solid #777;
		border-right: 1px solid #ddd;
		border-bottom: 1px solid #ddd;
		display: flex;
		align-items: center;
		justify-content: center;
	}

	.r-code .check {
		margin-bottom: 6px;
	}

	.check svg {
		flex: none;
	}

	.ref {
		width: 350px;
	}

	.term-lab {
		margin-left: 7px;
	}

	.wide {
		width: 138px;
	}

	.stars {
		letter-spacing: -1.05px;
	}

	.auth-lab {
		margin-left: 55px;
		width: 75px;
		flex: none;
		white-space: nowrap;
	}

	.auth {
		width: 72px;
	}

	.exp {
		width: 49px;
	}

	.fmt {
		margin-left: 7px;
		width: 94px;
		flex: none;
		word-spacing: 1.5px;
	}

	.pick {
		width: 191px;
		height: 23px;
		padding-top: 2px;
	}

	.curr {
		width: 112px;
		height: 25px;
		padding-top: 2px;
		margin-left: 13px;
		align-self: flex-start;
	}

	.post-lab {
		width: 190px;
		flex: none;
		white-space: nowrap;
	}

	.dlg-actions {
		display: flex;
		justify-content: space-between;
		padding: 13px 10px 0 8px;
	}

	.act {
		width: 115px;
		height: 30px;
	}

	.mouse {
		position: absolute;
		left: 168px;
		top: 268px;
	}
</style>
